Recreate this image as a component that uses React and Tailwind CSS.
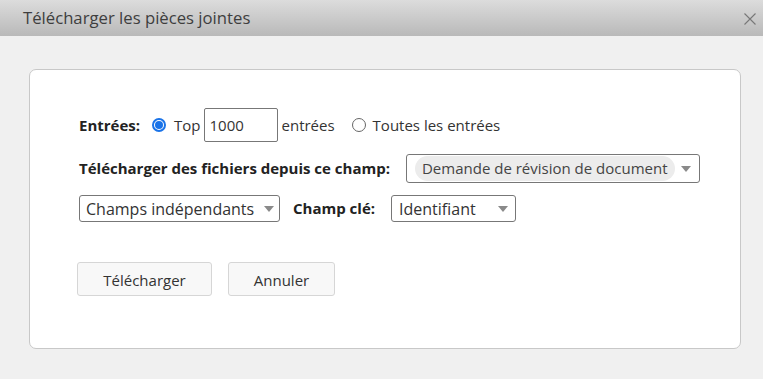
import React from "react";

const Caret = () => (
  <span className="ml-auto h-0 w-0 border-x-[5px] border-t-[6px] border-x-transparent border-t-[#8a8a8a]" />
);

const Radio = ({ checked }) =>
  checked ? (
    <span className="flex h-[14px] w-[14px] items-center justify-center rounded-full border-2 border-[#1a73e8] bg-white">
      <span className="h-[8px] w-[8px] rounded-full bg-[#1a73e8]" />
    </span>
  ) : (
    <span className="block h-[14px] w-[14px] rounded-full border border-[#666] bg-white" />
  );

export default function App() {
  return (
    <div className="h-[379px] w-[763px] bg-[#f0f0f0] font-['Open_Sans',sans-serif] text-[15px] text-[#333]">
      <div className="flex h-[36px] items-center bg-gradient-to-b from-[#dcdcdc] to-[#b9b9b9] pl-[23px] pr-[7px]">
        <span className="text-[16.7px] text-[#3e3e3e]">Télécharger les pièces jointes</span>
        <svg className="ml-auto mt-[2px] h-[12px] w-[12px]" viewBox="0 0 12 12">
          <path d="M0.5 0.5 L11.5 11.5 M11.5 0.5 L0.5 11.5" stroke="#777" strokeWidth="1.1" />
        </svg>
      </div>

      <div className="ml-[29px] mr-[22px] mt-[33px] h-[280px] rounded-[7px] border border-[#c8c8c8] bg-white pl-[49px] pt-[38px]">
        <div className="flex h-[34px] items-center">
          <span className="font-bold text-[#222]">Entrées:</span>
          <span className="ml-[12px]"><Radio checked /></span>
          <span className="ml-[8px]">Top</span>
          <span className="ml-[3px] flex h-[34px] w-[74px] items-center rounded-[2px] border border-[#777] px-[5px] text-[#333]">1000</span>
          <span className="ml-[4px]">entrées</span>
          <span className="ml-[17px]"><Radio /></span>
          <span className="ml-[7px]">Toutes les entrées</span>
        </div>

        <div className="mt-[12px] flex h-[29px] items-center">
          <span className="font-bold text-[#222]">Télécharger des fichiers depuis ce champ:</span>
          <div className="ml-[16px] flex h-[29px] w-[294px] items-center rounded-[3px] border border-[#777] pl-[8px] pr-[8px]">
            <span className="rounded-full bg-[#ececec] px-[7px] py-[1px] text-[#444]">Demande de révision de document</span>
            <Caret />
          </div>
        </div>

        <div className="mt-[12px] flex h-[27px] items-center">
          <div className="flex h-[27px] w-[201px] items-center rounded-[3px] border border-[#777] pl-[6px] pr-[5px] text-[16px] text-[#333]">
            <span>Champs indépendants</span>
            <Caret />
          </div>
          <span className="ml-[13px] font-bold text-[#222]">Champ clé:</span>
          <div className="ml-[16px] flex h-[27px] w-[125px] items-center rounded-[3px] border border-[#777] pl-[7px] pr-[7px] text-[16px] text-[#333]">
            <span>Identifiant</span>
            <Caret />
          </div>
        </div>

        <div className="-ml-[2px] mt-[40px] flex gap-[16px]">
          <button className="h-[34px] w-[135px] rounded-[3px] border border-[#d6d6d6] bg-[#f8f8f8] pt-[2px] text-[#333]">Télécharger</button>
          <button className="h-[34px] w-[107px] rounded-[3px] border border-[#d6d6d6] bg-[#f8f8f8] pt-[2px] text-[#333]">Annuler</button>
        </div>
      </div>
    </div>
  );
}
